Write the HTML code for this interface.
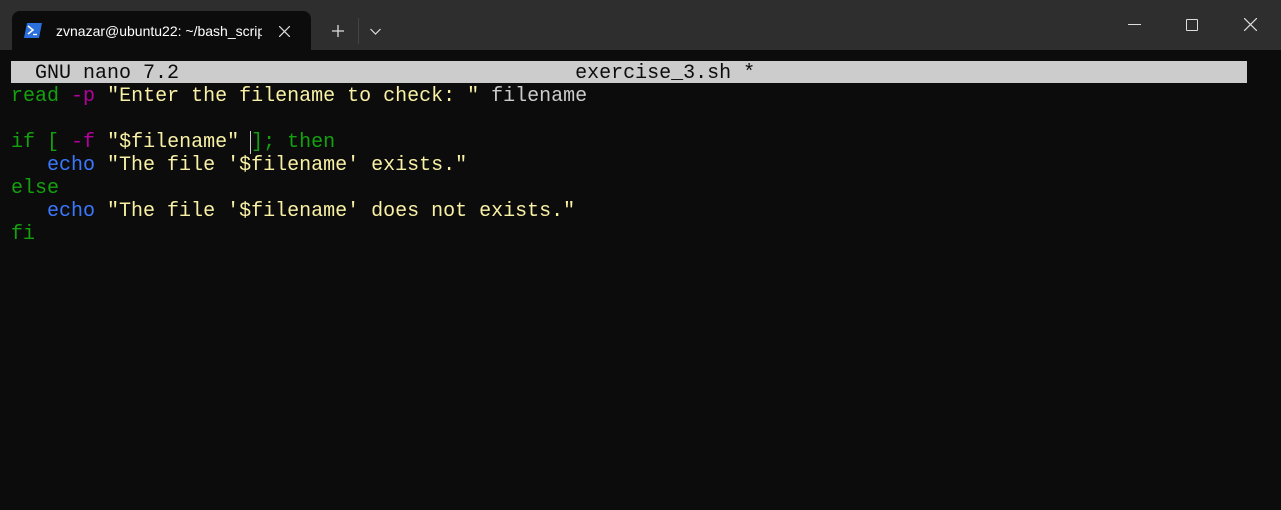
<!DOCTYPE html>
<html><head><style>
html,body{margin:0;padding:0;}
body{width:1281px;height:510px;background:#0c0c0c;position:relative;overflow:hidden;font-family:"Liberation Sans",sans-serif;}
.tb{position:absolute;left:0;top:0;width:1281px;height:50px;background:#2e2e2e;}
.tab{position:absolute;left:12px;top:11px;width:299px;height:39px;background:#0c0c0c;border-radius:8px 8px 0 0;}
.tab .t{position:absolute;left:44px;top:12px;color:#fff;font-size:14px;white-space:nowrap;width:206px;overflow:hidden;}
.term{position:absolute;left:11px;top:62px;font-family:"Liberation Mono",monospace;font-size:20px;line-height:23px;white-space:pre;color:#cccccc;}
.bar{position:absolute;left:11px;top:61px;width:1236px;height:22px;background:#cccccc;}
.g{color:#13a10e}.m{color:#b4009e}.y{color:#f9f1a5}.b{color:#3b78ff}
</style></head><body>
<div class="tb">
 <div class="tab">
  <svg style="position:absolute;left:12px;top:12px" width="18" height="15" viewBox="0 0 18 15"><polygon points="3,0 18,0 15,15 0,15" fill="#2a6fdb"/><path d="M4,3 L9,7 L4,11" stroke="#fff" stroke-width="1.6" fill="none"/><path d="M9,11.5 H13" stroke="#fff" stroke-width="1.4"/></svg>
  <div class="t">zvnazar@ubuntu22: ~/bash_scripts</div>
  <svg style="position:absolute;left:267px;top:15px" width="11" height="11"><path d="M0,0 L11,11 M11,0 L0,11" stroke="#ddd" stroke-width="1.2"/></svg>
 </div>
 <svg style="position:absolute;left:332px;top:25px" width="12" height="12"><path d="M6,0 V12 M0,6 H12" stroke="#ddd" stroke-width="1.3"/></svg>
 <div style="position:absolute;left:358px;top:18px;width:1px;height:26px;background:#444"></div>
 <svg style="position:absolute;left:370px;top:28px" width="11" height="7"><path d="M0.5,1 L5.5,6 L10.5,1" stroke="#ddd" stroke-width="1.2" fill="none"/></svg>
 <div style="position:absolute;left:1128px;top:24px;width:13px;height:1px;background:#ddd"></div>
 <div style="position:absolute;left:1186px;top:19px;width:10px;height:10px;border:1.3px solid #ddd;border-radius:1px"></div>
 <svg style="position:absolute;left:1244px;top:18px" width="13" height="13"><path d="M0,0 L13,13 M13,0 L0,13" stroke="#ddd" stroke-width="1.2"/></svg>
</div>
<div class="bar"></div>
<div class="term"><span style="color:#0c0c0c">  GNU nano 7.2                                 exercise_3.sh *</span>
<span class="g">read</span> <span class="m">-p</span> <span class="y">"Enter the filename to check: "</span> filename

<span class="g">if [</span> <span class="m">-f</span> <span class="y">"$filename"</span> <span style="border-left:1px solid #ccc;margin-left:-1px"></span><span class="g">]; then</span>
   <span class="b">echo</span> <span class="y">"The file '$filename' exists."</span>
<span class="g">else</span>
   <span class="b">echo</span> <span class="y">"The file '$filename' does not exists."</span>
<span class="g">fi</span></div>
</body></html>
